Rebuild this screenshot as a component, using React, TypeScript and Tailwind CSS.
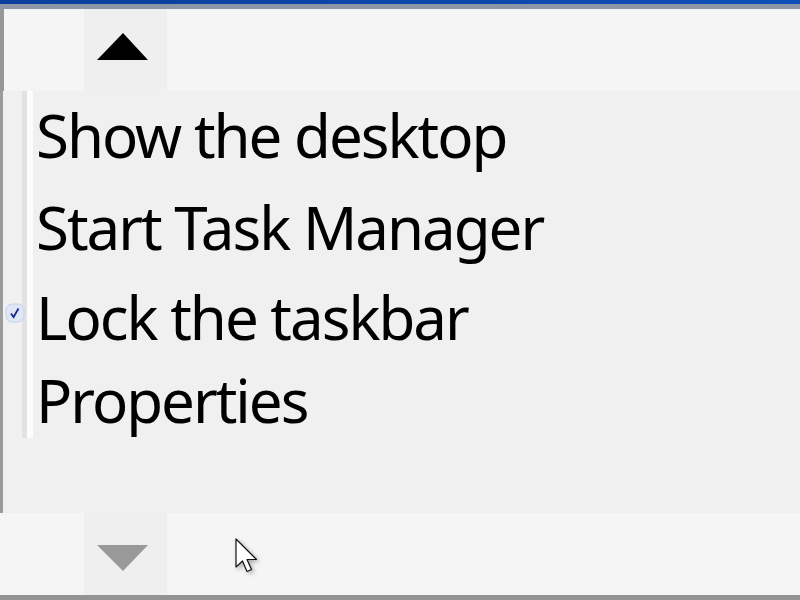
const items = [
  { label: "Show the desktop", h: "h-[92px]", checked: false },
  { label: "Start Task Manager", h: "h-[90px]", checked: false },
  { label: "Lock the taskbar", h: "h-[83px]", checked: true },
  { label: "Properties", h: "h-[80px]", checked: false },
];

function CheckMark() {
  return (
    <svg width="20" height="20" viewBox="0 0 20 20">
      <rect x="1" y="1" width="18" height="18" rx="6" fill="#dfe6f6" stroke="#c4d0ec" />
      <path d="M6 10.5 L8.6 14 L13.5 5.5" fill="none" stroke="#1a2a8a" strokeWidth="1.8" />
    </svg>
  );
}

function Cursor() {
  return (
    <svg width="28" height="38" viewBox="0 0 28 38" className="drop-shadow-[2px_2px_2px_rgba(0,0,0,0.3)]">
      <path
        d="M1 1 L1 29 L7.5 23 L12 33.5 L16.5 31.5 L12 21.5 L21.5 21.5 Z"
        fill="#fff"
        stroke="#111"
        strokeWidth="1.2"
        strokeLinejoin="round"
      />
    </svg>
  );
}

export default function App() {
  return (
    <div className="relative w-[800px] h-[600px] flex flex-col overflow-hidden bg-[#f5f5f5] font-['Noto_Sans',sans-serif]">
      <div className="h-[4px] bg-gradient-to-r from-[#0a3f9c] to-[#0d4fb8]" />
      <div className="h-[5px] bg-[#8d96a6]" />

      {/* scroll up row */}
      <div className="h-[82px] flex">
        <div className="w-[4px] bg-[#979797]" />
        <div className="w-[80px]" />
        <div className="w-[83px] bg-[#efefef] pt-[24px] pl-[13px]">
          <div className="w-0 h-0 border-l-[26px] border-r-[25px] border-b-[27px] border-l-transparent border-r-transparent border-b-black" />
        </div>
      </div>

      {/* menu */}
      <div className="h-[422px] flex bg-[#f0f0f0] relative">
        <div className="w-[3px] bg-[#9b9b9b]" />
        <div className="h-[347px] flex">
          <div className="w-[19px]" />
          <div className="w-[5px] bg-[#e2e2e2]" />
          <div className="w-[6px] bg-[#fcfcfc]" />
        </div>
        <div className="absolute left-0 top-0 pt-[14px] flex flex-col">
          {items.map((item) => (
            <div key={item.label} className={`${item.h} flex items-start`}>
              <div className="w-[36px] pl-[5px] pt-[16px]">
                {item.checked && <CheckMark />}
              </div>
              <span className="text-[60px] leading-none text-black tracking-[-2px]">
                {item.label}
              </span>
            </div>
          ))}
        </div>
      </div>

      {/* scroll down row */}
      <div className="h-[82px] flex relative">
        <div className="w-[84px]" />
        <div className="w-[83px] h-[84px] bg-[#efefef] pt-[32px] pl-[13px]">
          <div className="w-0 h-0 border-l-[26px] border-r-[25px] border-t-[26px] border-l-transparent border-r-transparent border-t-[#999999]" />
        </div>
        <div className="absolute left-[235px] top-[25px]">
          <Cursor />
        </div>
      </div>
      <div className="h-[5px] bg-[#939393] relative z-10" />
    </div>
  );
}
